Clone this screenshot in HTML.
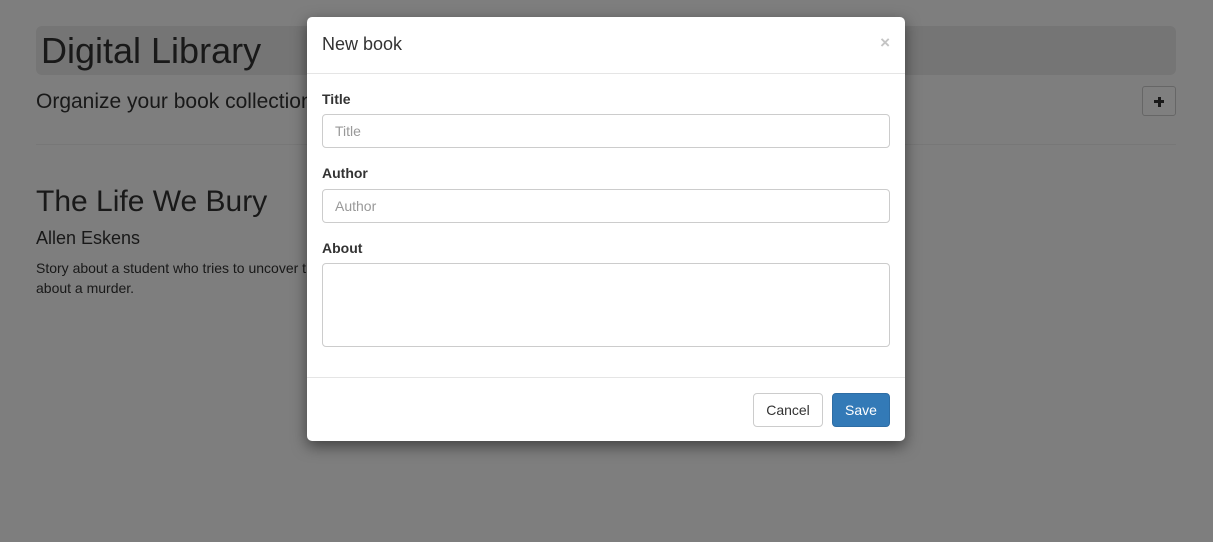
<!DOCTYPE html>
<html><head><style>
*{box-sizing:border-box}
body{margin:0;width:1213px;height:542px;overflow:hidden;background:#fdfdfd;font-family:"Liberation Sans",sans-serif;color:#333;position:relative}
.abs{position:absolute}
.ov{position:absolute;left:0;top:0;width:1213px;height:542px;background:rgba(0,0,0,.5)}
.modal{position:absolute;left:307px;top:17px;width:598px;height:424px;background:#fff;border-radius:5px;box-shadow:0 5px 15px rgba(0,0,0,.5)}
label{position:absolute;left:15px;font-weight:bold;font-size:14px}
.in{position:absolute;left:15px;width:568px;height:34px;border:1px solid #ccc;border-radius:4px;padding:6px 12px;font-size:14px;color:#999;line-height:20px}
.btn{position:absolute;top:376px;height:34px;border-radius:4px;font-size:14px;line-height:32px;text-align:center}
</style></head><body>
<div class="abs" style="left:36px;top:26px;width:1140px;height:49px;background:#eaeaea;border-radius:6px"></div>
<div class="abs" style="left:41px;top:30px;font-size:36px;line-height:42px">Digital Library</div>
<div class="abs" style="left:36px;top:89px;font-size:21px;line-height:26px">Organize your book collection</div>
<div class="abs" style="left:1142px;top:86px;width:34px;height:30px;border:1px solid #ccc;border-radius:3px;background:#fff"><div style="position:absolute;left:11px;top:13px;width:10px;height:3px;background:#333"></div><div style="position:absolute;left:14.5px;top:9.5px;width:3px;height:10px;background:#333"></div></div>
<div class="abs" style="left:36px;top:144px;width:1140px;border-top:1px solid #eee"></div>
<div class="abs" style="left:36px;top:185px;font-size:30px;line-height:34px">The Life We Bury</div>
<div class="abs" style="left:36px;top:227px;font-size:18px;line-height:22px">Allen Eskens</div>
<div class="abs" style="left:36px;top:258px;font-size:14px;line-height:20px;width:600px;color:#333">Story about a student who tries to uncover the truth about<br>about a murder.</div>
<div class="ov"></div>
<div class="modal">
<div class="abs" style="left:15px;top:16px;font-size:18px;line-height:22px">New book</div>
<div class="abs" style="right:15px;top:17px;font-size:17px;font-weight:bold;color:#c4c4c4;line-height:17px">×</div>
<div class="abs" style="left:0;top:56px;width:598px;border-top:1px solid #e5e5e5"></div>
<label style="top:74px">Title</label>
<div class="in" style="top:97px">Title</div>
<label style="top:148px">Author</label>
<div class="in" style="top:172px">Author</div>
<label style="top:223px">About</label>
<div class="in" style="top:246px;height:84px"></div>
<div class="abs" style="left:0;top:360px;width:598px;border-top:1px solid #e5e5e5"></div>
<div class="btn" style="left:446px;width:70px;border:1px solid #ccc;color:#333">Cancel</div>
<div class="btn" style="left:525px;width:58px;background:#337ab7;border:1px solid #2e6da4;color:#fff">Save</div>
</div>
</body></html>
